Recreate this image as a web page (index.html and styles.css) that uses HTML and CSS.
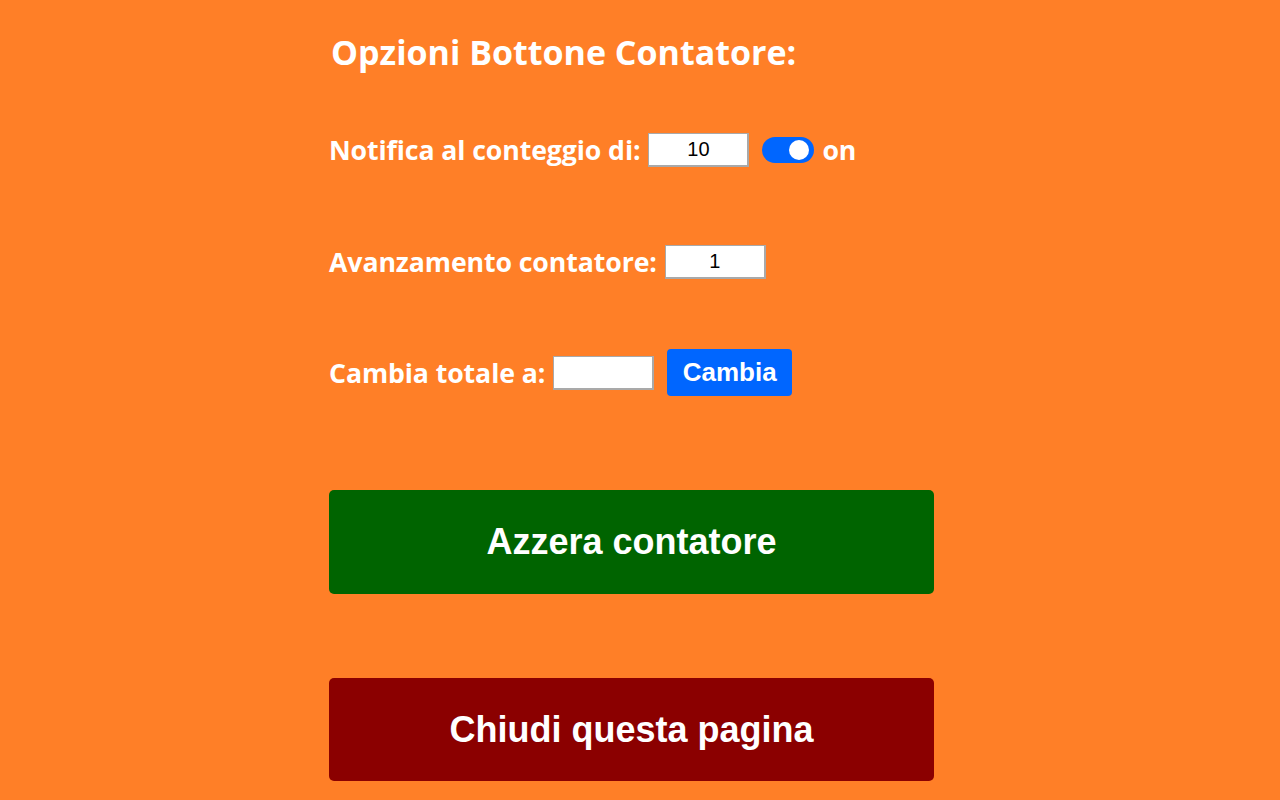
FILE: index.html
```html
<!DOCTYPE html>
<html lang="it">
<head>
<meta charset="utf-8">
<title>Opzioni Bottone Contatore</title>
<link rel="stylesheet" href="styles.css">
</head>
<body>
<main class="page">
  <h1 class="title">Opzioni Bottone Contatore:</h1>

  <div class="row row-notify">
    <label class="label" for="notify">Notifica al conteggio di:</label>
    <input class="num" id="notify" type="text" value="10">
    <span class="toggle" role="switch" aria-checked="true"><span class="knob"></span></span>
    <span class="label on">on</span>
  </div>

  <div class="row row-step">
    <label class="label" for="step">Avanzamento contatore:</label>
    <input class="num" id="step" type="text" value="1">
  </div>

  <div class="row row-total">
    <label class="label" for="total">Cambia totale a:</label>
    <input class="num" id="total" type="text" value="">
    <button class="btn-change" type="button">Cambia</button>
  </div>

  <button class="big-btn reset" type="button">Azzera contatore</button>
  <button class="big-btn close" type="button">Chiudi questa pagina</button>
</main>
</body>
</html>
```

FILE: styles.css
```css
html, body {
  margin: 0;
  padding: 0;
  background: #ff7f27;
}

body {
  font-family: "Open Sans", "Noto Sans", sans-serif;
  color: #ffffff;
}

.page {
  width: 622px;
  margin: 0 auto;
  display: flex;
  flex-direction: column;
  align-items: flex-start;
}

.title {
  margin: 0;
  padding-top: 29px;
  padding-left: 2px;
  font-size: 34px;
  line-height: 46px;
  font-weight: 700;
}

.row {
  display: flex;
  align-items: center;
  height: 34px;
}

.row-notify { margin-top: 58px; }
.row-step { margin-top: 78px; }
.row-total { margin-top: 70px; height: 47px; }

.label {
  font-size: 26.7px;
  font-weight: 700;
  line-height: 34px;
  letter-spacing: -0.1px;
}

.num {
  box-sizing: border-box;
  width: 101px;
  height: 34px;
  margin-left: 8px;
  padding: 0;
  border-style: solid;
  border-color: #a9a9a9;
  border-width: 1px 2px 2px 1px;
  background: #ffffff;
  font-family: "Liberation Sans", Arial, sans-serif;
  font-size: 20px;
  color: #000000;
  text-align: center;
  outline: none;
}

.toggle {
  position: relative;
  display: inline-block;
  width: 52px;
  height: 26px;
  margin-left: 13px;
  border-radius: 13px;
  background: #0066ff;
}

.knob {
  position: absolute;
  top: 3px;
  right: 5px;
  width: 20px;
  height: 20px;
  border-radius: 50%;
  background: #ffffff;
}

.on {
  margin-left: 8px;
}

.btn-change {
  height: 47px;
  width: 125px;
  margin-left: 13px;
  padding: 0;
  border: none;
  border-radius: 4px;
  background: #0066ff;
  color: #ffffff;
  font-family: "Liberation Sans", Arial, sans-serif;
  font-weight: 700;
  font-size: 26px;
}

.big-btn {
  width: 605px;
  border: none;
  border-radius: 5px;
  color: #ffffff;
  font-family: "Liberation Sans", Arial, sans-serif;
  font-weight: 700;
  font-size: 36px;
  padding: 0;
}

.reset {
  margin-top: 94px;
  height: 104px;
  background: #006400;
}

.close {
  margin-top: 84px;
  height: 103px;
  background: #8b0000;
}
```
